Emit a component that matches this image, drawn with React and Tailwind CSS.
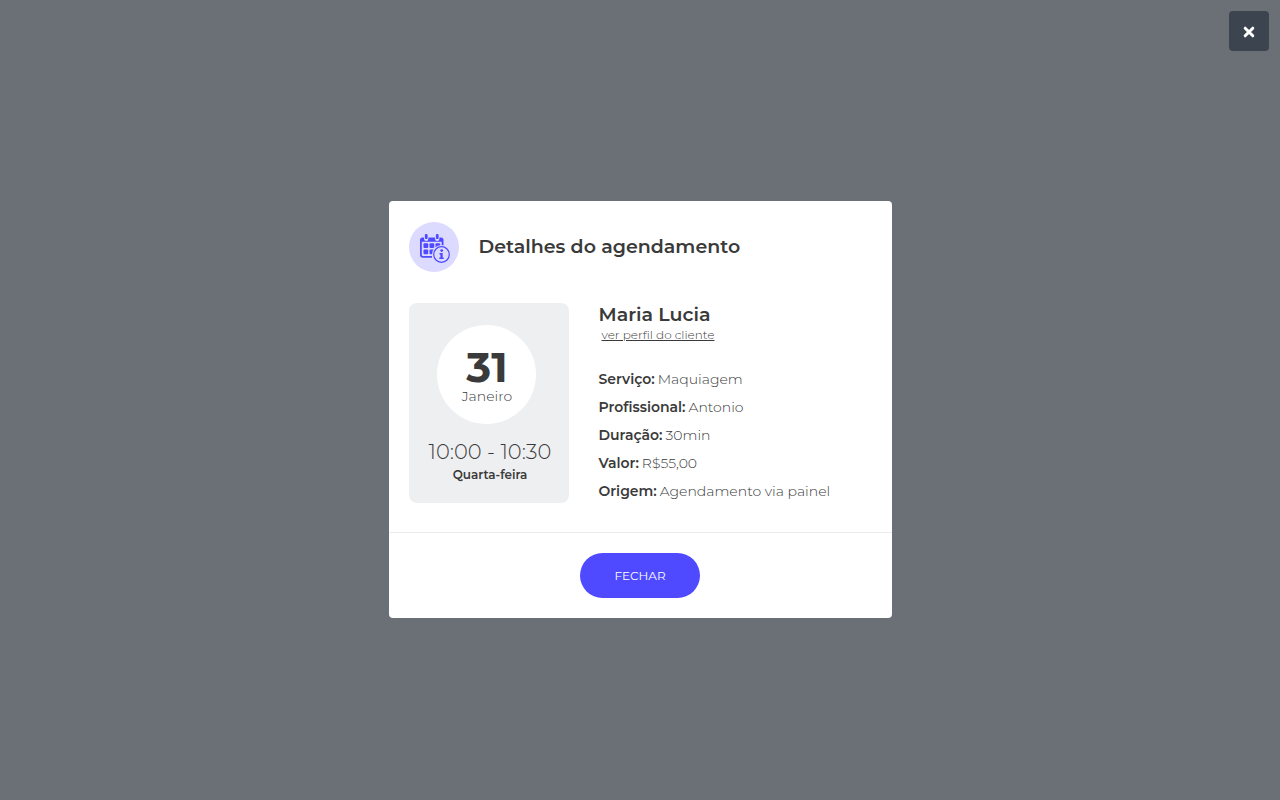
const details = [
  ["Serviço:", "Maquiagem"],
  ["Profissional:", "Antonio"],
  ["Duração:", "30min"],
  ["Valor:", "R$55,00"],
  ["Origem:", "Agendamento via painel"],
];

function CalendarInfoIcon() {
  return (
    <svg viewBox="0 0 30 30" className="size-[30px]" aria-hidden="true">
      <path
        fill="#4f4aff"
        d="M2.500 3.500H4v1.300a2.200 2.200 0 0 0 4.400 0V3.500H15v1.300a2.200 2.200 0 0 0 4.400 0V3.500H21A2.500 2.500 0 0 1 23.500 6V12h-1.800V7.700H1.800v13A1.300 1.300 0 0 0 3.100 22H12v1.800H3A3 3 0 0 1 0 20.800V6a2.500 2.500 0 0 1 2.500-2.500z"
      />
      <rect x="4.900" y="0" width="2.700" height="5" rx="1" fill="#4f4aff" />
      <rect x="15.900" y="0" width="2.700" height="5" rx="1" fill="#4f4aff" />
      <g fill="#4f4aff">
        <rect x="3.500" y="9.200" width="4.700" height="4.700" rx="1" />
        <rect x="9.500" y="9.200" width="4.700" height="4.700" rx="1" />
        <rect x="15.500" y="9.200" width="4.700" height="4.700" rx="1" />
        <rect x="3.500" y="15.500" width="4.700" height="4.700" rx="1" />
        <rect x="9.500" y="15.500" width="4.700" height="4.700" rx="1" />
      </g>
      <circle cx="21.500" cy="20.500" r="9.500" fill="#dcdaff" />
      <circle cx="21.500" cy="20.500" r="7.800" fill="none" stroke="#4f4aff" strokeWidth="1.200" />
      <circle cx="21.700" cy="16.600" r="1.400" fill="#4f4aff" />
      <path d="M19.500 19h3.200v4.600h1v1.400h-4.400v-1.400h1.100v-3.200h-.9z" fill="#4f4aff" />
    </svg>
  );
}

export default function App() {
  return (
    <div className="relative flex min-h-screen items-center justify-center bg-[#6b6f76] px-4 pt-[19px] font-[Montserrat,Inter,sans-serif] text-[#3a3a3a]">
      <button
        type="button"
        aria-label="Fechar janela"
        className="absolute top-[11px] right-[11px] flex size-10 items-center justify-center rounded bg-[#3c4450] pt-px text-white"
      >
        <svg viewBox="0 0 12 12" className="size-3" aria-hidden="true">
          <path d="M2.200 2.200 9.800 9.800M9.800 2.200 2.200 9.800" stroke="currentColor" strokeWidth="3" strokeLinecap="round" />
        </svg>
      </button>

      <section role="dialog" aria-labelledby="titulo" className="w-full max-w-[503px] rounded bg-white">
        <header className="flex items-center gap-5 px-5 pt-[21px]">
          <span className="flex size-[50px] shrink-0 items-center justify-center rounded-full bg-[#dcdaff]">
            <span className="pt-1 pl-0.5">
              <CalendarInfoIcon />
            </span>
          </span>
          <h1 id="titulo" className="text-[19px] leading-6 font-semibold">Detalhes do agendamento</h1>
        </header>

        <div className="flex flex-wrap gap-[30px] px-5 pt-[31px] pb-[29px]">
          <div className="flex w-40 shrink-0 flex-col items-center rounded-lg bg-[#eeeff1] px-2 pt-[22px] pb-[18px]">
            <div className="mr-[5px] flex size-[99px] flex-col items-center justify-center rounded-full bg-white pl-0.5">
              <span className="text-[42px] leading-[42px] font-bold">31</span>
              <span className="text-sm leading-4 font-light">Janeiro</span>
            </div>
            <div className="mt-4 ml-[3px] text-[21px] leading-6 font-light whitespace-nowrap">10:00 - 10:30</div>
            <div className="ml-[3px] text-xs leading-[21px] font-semibold">Quarta-feira</div>
          </div>

          <div className="min-w-0 flex-1">
            <h2 className="text-[19px] leading-6 font-semibold">Maria Lucia</h2>
            <a href="#perfil" className="ml-[3px] block w-fit text-xs leading-4 font-light underline">
              ver perfil do cliente
            </a>
            <dl className="mt-[26px] flex flex-col gap-2">
              {details.map(([label, value]) => (
                <div key={label} className="flex gap-[3px] text-sm leading-5">
                  <dt className="font-semibold">{label}</dt>
                  <dd className="font-light">{value}</dd>
                </div>
              ))}
            </dl>
          </div>
        </div>

        <footer className="flex justify-center border-t border-[#ebebeb] py-5">
          <button type="button" className="h-[45px] w-[120px] rounded-full bg-[#4f4aff] text-xs text-white">
            FECHAR
          </button>
        </footer>
      </section>
    </div>
  );
}
